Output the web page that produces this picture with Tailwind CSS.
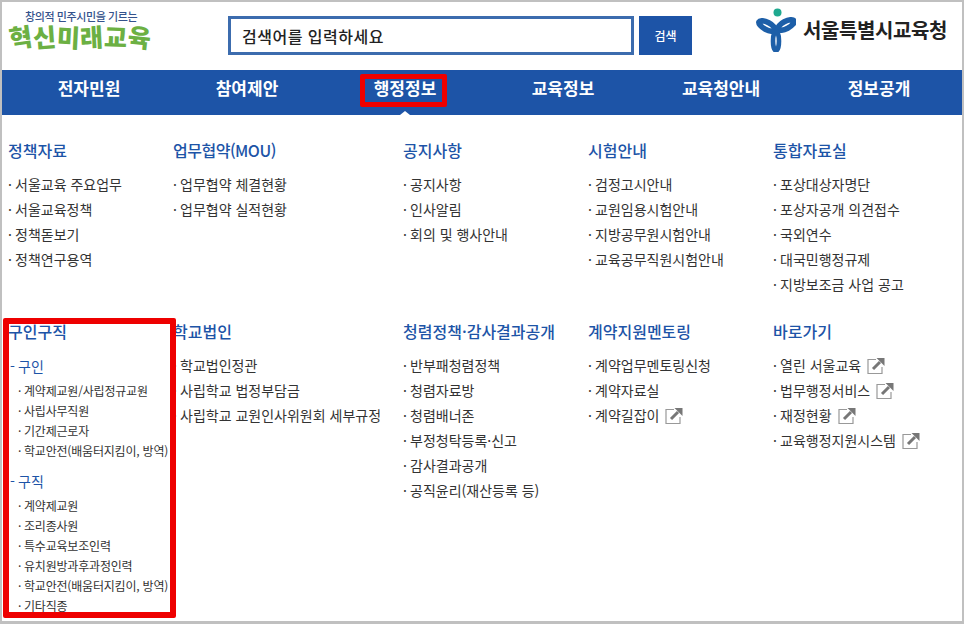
<!DOCTYPE html>
<html lang="ko">
<head>
<meta charset="UTF-8">
<title>서울특별시교육청</title>
<script src="https://cdn.jsdelivr.net/npm/@tailwindcss/browser@4"></script>
</head>
<body class="bg-white font-['Noto_Sans_CJK_KR','Noto_Sans',sans-serif] overflow-hidden">
<div class="relative w-[964px] h-[624px] overflow-hidden border-x-2 border-t-2 border-b-[3px] border-[#c0c0c0]">

  <!-- 상단 -->
  <header class="flex items-start h-[68px]">
    <div class="w-[226px] pl-[7px] pt-[8px]">
      <div class="text-[11px] leading-[13px] pl-[16px] text-[#34528c] font-medium tracking-[-0.4px] whitespace-nowrap">창의적 민주시민을 기르는</div>
      <div class="flex text-[25px] leading-[27px] font-black text-[#6cb043] w-[142px] justify-between">
        <span class="inline-block rotate-[-8deg]">혁</span>
        <span class="inline-block rotate-[-4deg]">신</span>
        <span class="inline-block rotate-[3deg]">미</span>
        <span class="inline-block rotate-[-3deg]">래</span>
        <span class="inline-block rotate-[2deg]">교</span>
        <span class="inline-block rotate-[6deg]">육</span>
      </div>
    </div>
    <div class="mt-[14px] w-[406px] h-[39px] border-[3px] border-[#3c6cae] flex items-center pl-[11px] text-[16px] tracking-[0.5px] font-medium text-[#222]">검색어를 입력하세요</div>
    <div class="ml-[5px] mt-[14px] w-[53px] h-[39px] bg-[#1d54a7] text-white text-[12px] font-medium flex items-center justify-center">검색</div>
    <div class="ml-[64px] mt-[6px] flex items-center">
      <svg width="40" height="44" viewBox="0 0 40 44" fill="none">
        <circle cx="21.5" cy="4.5" r="4" fill="#1fa98f"/>
        <ellipse cx="11" cy="18" rx="9" ry="3.6" transform="rotate(28 11 18)" stroke="#1d5fa8" stroke-width="5.6"/>
        <ellipse cx="30" cy="17" rx="9" ry="3.6" transform="rotate(-28 30 17)" stroke="#1d5fa8" stroke-width="5.6"/>
        <ellipse cx="20" cy="33" rx="3" ry="9.5" stroke="#1d5fa8" stroke-width="4.6"/>
      </svg>
      <span class="ml-[7px] text-[20px] font-bold text-[#222] tracking-[-0.4px] whitespace-nowrap">서울특별시교육청</span>
    </div>
  </header>

  <!-- 메뉴 -->
  <nav class="relative h-[45px] bg-[#1d54a7] text-white text-[17px] font-bold pl-[8px]">
    <ul class="flex items-start pt-[5px]">
      <li class="w-[158px] text-center">전자민원</li>
      <li class="w-[158px] text-center">참여제안</li>
      <li class="w-[158px] text-center">행정정보</li>
      <li class="w-[158px] text-center">교육정보</li>
      <li class="w-[158px] text-center">교육청안내</li>
      <li class="w-[158px] text-center">정보공개</li>
    </ul>
    <div class="absolute left-[398px] bottom-0 w-0 h-0 border-x-[5px] border-x-transparent border-b-[4px] border-b-white"></div>
  </nav>

  <!-- 메뉴 목록 -->
  <main class="grid grid-cols-[165px_230px_185px_185px_1fr] pl-[6px] text-[14px] text-[#333]">
    <section class="pt-[23px]">
      <h2 class="text-[16px] font-medium leading-[24px] text-[#1d54a7]">정책자료</h2>
      <ul class="mt-[10px] leading-[25px]">
        <li><span class="inline-block w-[7px]">·</span>서울교육 주요업무</li>
        <li><span class="inline-block w-[7px]">·</span>서울교육정책</li>
        <li><span class="inline-block w-[7px]">·</span>정책돋보기</li>
        <li><span class="inline-block w-[7px]">·</span>정책연구용역</li>
      </ul>
    </section>
    <section class="pt-[23px]">
      <h2 class="text-[16px] font-medium leading-[24px] text-[#1d54a7] tracking-[-0.5px]">업무협약(MOU)</h2>
      <ul class="mt-[10px] leading-[25px]">
        <li><span class="inline-block w-[7px]">·</span>업무협약 체결현황</li>
        <li><span class="inline-block w-[7px]">·</span>업무협약 실적현황</li>
      </ul>
    </section>
    <section class="pt-[23px]">
      <h2 class="text-[16px] font-medium leading-[24px] text-[#1d54a7]">공지사항</h2>
      <ul class="mt-[10px] leading-[25px]">
        <li><span class="inline-block w-[7px]">·</span>공지사항</li>
        <li><span class="inline-block w-[7px]">·</span>인사알림</li>
        <li><span class="inline-block w-[7px]">·</span>회의 및 행사안내</li>
      </ul>
    </section>
    <section class="pt-[23px]">
      <h2 class="text-[16px] font-medium leading-[24px] text-[#1d54a7]">시험안내</h2>
      <ul class="mt-[10px] leading-[25px]">
        <li><span class="inline-block w-[7px]">·</span>검정고시안내</li>
        <li><span class="inline-block w-[7px]">·</span>교원임용시험안내</li>
        <li><span class="inline-block w-[7px]">·</span>지방공무원시험안내</li>
        <li><span class="inline-block w-[7px]">·</span>교육공무직원시험안내</li>
      </ul>
    </section>
    <section class="pt-[23px]">
      <h2 class="text-[16px] font-medium leading-[24px] text-[#1d54a7]">통합자료실</h2>
      <ul class="mt-[10px] leading-[25px]">
        <li><span class="inline-block w-[7px]">·</span>포상대상자명단</li>
        <li><span class="inline-block w-[7px]">·</span>포상자공개 의견접수</li>
        <li><span class="inline-block w-[7px]">·</span>국외연수</li>
        <li><span class="inline-block w-[7px]">·</span>대국민행정규제</li>
        <li><span class="inline-block w-[7px]">·</span>지방보조금 사업 공고</li>
      </ul>
    </section>

    <section class="pt-[22px]">
      <h2 class="text-[16px] font-medium leading-[24px] text-[#1d54a7]">구인구직</h2>
      <div class="mt-[11px] pl-[2px] leading-[25px] text-[#1d54a7]"><span class="inline-block w-[8px]">-</span>구인</div>
      <ul class="mt-[2px] pl-[10px] text-[12px] leading-[20px] tracking-[-0.2px] whitespace-nowrap">
        <li><span class="inline-block w-[6px]">·</span>계약제교원/사립정규교원</li>
        <li><span class="inline-block w-[6px]">·</span>사립사무직원</li>
        <li><span class="inline-block w-[6px]">·</span>기간제근로자</li>
        <li><span class="inline-block w-[6px]">·</span>학교안전(배움터지킴이, 방역)</li>
      </ul>
      <div class="mt-[8px] pl-[2px] leading-[25px] text-[#1d54a7]"><span class="inline-block w-[8px]">-</span>구직</div>
      <ul class="mt-[2px] pl-[10px] text-[12px] leading-[20px] tracking-[-0.2px] whitespace-nowrap">
        <li><span class="inline-block w-[6px]">·</span>계약제교원</li>
        <li><span class="inline-block w-[6px]">·</span>조리종사원</li>
        <li><span class="inline-block w-[6px]">·</span>특수교육보조인력</li>
        <li><span class="inline-block w-[6px]">·</span>유치원방과후과정인력</li>
        <li><span class="inline-block w-[6px]">·</span>학교안전(배움터지킴이, 방역)</li>
        <li><span class="inline-block w-[6px]">·</span>기타직종</li>
      </ul>
    </section>
    <section class="pt-[22px]">
      <h2 class="text-[16px] font-medium leading-[24px] text-[#1d54a7]">학교법인</h2>
      <ul class="mt-[10px] leading-[25px] whitespace-nowrap">
        <li><span class="inline-block w-[7px]">·</span>학교법인정관</li>
        <li><span class="inline-block w-[7px]">·</span>사립학교 법정부담금</li>
        <li><span class="inline-block w-[7px]">·</span>사립학교 교원인사위원회 세부규정</li>
      </ul>
    </section>
    <section class="pt-[22px]">
      <h2 class="text-[16px] font-medium leading-[24px] text-[#1d54a7]">청렴정책·감사결과공개</h2>
      <ul class="mt-[10px] leading-[25px]">
        <li><span class="inline-block w-[7px]">·</span>반부패청렴정책</li>
        <li><span class="inline-block w-[7px]">·</span>청렴자료방</li>
        <li><span class="inline-block w-[7px]">·</span>청렴배너존</li>
        <li><span class="inline-block w-[7px]">·</span>부정청탁등록·신고</li>
        <li><span class="inline-block w-[7px]">·</span>감사결과공개</li>
        <li><span class="inline-block w-[7px]">·</span>공직윤리(재산등록 등)</li>
      </ul>
    </section>
    <section class="pt-[22px]">
      <h2 class="text-[16px] font-medium leading-[24px] text-[#1d54a7]">계약지원멘토링</h2>
      <ul class="mt-[10px] leading-[25px]">
        <li><span class="inline-block w-[7px]">·</span>계약업무멘토링신청</li>
        <li><span class="inline-block w-[7px]">·</span>계약자료실</li>
        <li class="flex items-center"><span class="inline-block w-[7px]">·</span>계약길잡이
          <svg class="ml-[6px]" width="18" height="18" viewBox="0 0 18 18" fill="none"><path d="M9 2.5H1V16.5H15V10" stroke="#999" stroke-width="1.2"/><path d="M6 12L13 5" stroke="#777" stroke-width="3"/><path d="M9.5 1H17.5V9Z" fill="#777"/></svg>
        </li>
      </ul>
    </section>
    <section class="pt-[22px]">
      <h2 class="text-[16px] font-medium leading-[24px] text-[#1d54a7]">바로가기</h2>
      <ul class="mt-[10px] leading-[25px]">
        <li class="flex items-center"><span class="inline-block w-[7px]">·</span>열린 서울교육
          <svg class="ml-[6px]" width="18" height="18" viewBox="0 0 18 18" fill="none"><path d="M9 2.5H1V16.5H15V10" stroke="#999" stroke-width="1.2"/><path d="M6 12L13 5" stroke="#777" stroke-width="3"/><path d="M9.5 1H17.5V9Z" fill="#777"/></svg>
        </li>
        <li class="flex items-center"><span class="inline-block w-[7px]">·</span>법무행정서비스
          <svg class="ml-[6px]" width="18" height="18" viewBox="0 0 18 18" fill="none"><path d="M9 2.5H1V16.5H15V10" stroke="#999" stroke-width="1.2"/><path d="M6 12L13 5" stroke="#777" stroke-width="3"/><path d="M9.5 1H17.5V9Z" fill="#777"/></svg>
        </li>
        <li class="flex items-center"><span class="inline-block w-[7px]">·</span>재정현황
          <svg class="ml-[6px]" width="18" height="18" viewBox="0 0 18 18" fill="none"><path d="M9 2.5H1V16.5H15V10" stroke="#999" stroke-width="1.2"/><path d="M6 12L13 5" stroke="#777" stroke-width="3"/><path d="M9.5 1H17.5V9Z" fill="#777"/></svg>
        </li>
        <li class="flex items-center"><span class="inline-block w-[7px]">·</span>교육행정지원시스템
          <svg class="ml-[6px]" width="18" height="18" viewBox="0 0 18 18" fill="none"><path d="M9 2.5H1V16.5H15V10" stroke="#999" stroke-width="1.2"/><path d="M6 12L13 5" stroke="#777" stroke-width="3"/><path d="M9.5 1H17.5V9Z" fill="#777"/></svg>
        </li>
      </ul>
    </section>
  </main>

  <!-- 빨간 강조 표시 -->
  <div class="absolute left-[358px] top-[72px] w-[87px] h-[33px] border-[5px] border-[#ee0000] rounded-[2px]"></div>
  <div class="absolute left-[1px] top-[316px] w-[173px] h-[300px] border-[6px] border-[#ee0000] rounded-[2px]"></div>
</div>
</body>
</html>
